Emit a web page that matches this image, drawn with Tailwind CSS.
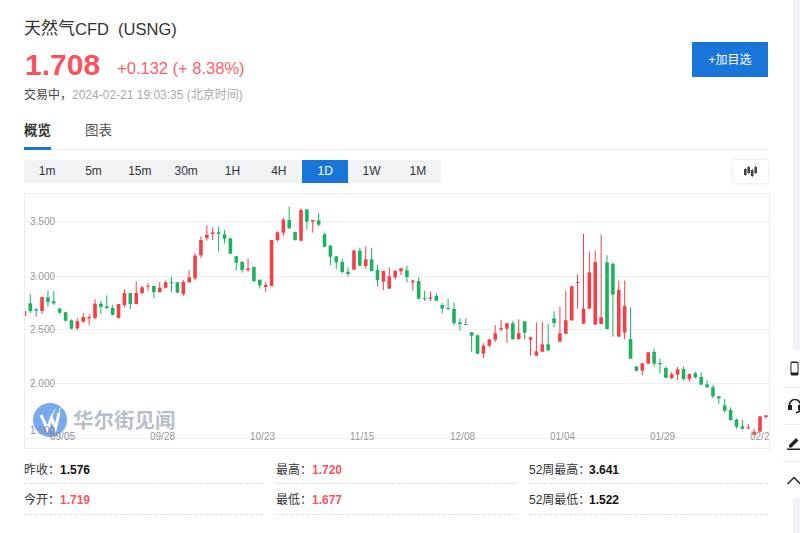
<!DOCTYPE html>
<html lang="zh">
<head>
<meta charset="utf-8">
<title>天然气CFD (USNG)</title>
<script src="https://cdn.jsdelivr.net/npm/@tailwindcss/browser@4"></script>
</head>
<body class="relative w-[800px] h-[533px] overflow-hidden bg-white font-['Liberation_Sans','Noto_Sans_CJK_SC',sans-serif] text-[#333]">
<div class="flex h-full">
  <main class="w-[793px] shrink-0 pl-6">
    <!-- header -->
    <div class="flex w-[744px] justify-between">
      <div class="pt-[19px]">
        <h1 class="flex h-5 items-center text-[16.5px] leading-5 font-normal whitespace-pre"><span class="text-[17px]">天然气</span>CFD  (USNG)</h1>
        <div class="mt-[8px] flex h-9 items-center pl-px">
          <span class="text-[30px] leading-9 font-bold text-[#f6545f]">1.708</span>
          <span class="ml-[17px] mt-[5px] text-[16.5px] leading-6 text-[#f6626c]">+0.132 (+ 8.38%)</span>
        </div>
        <div class="mt-[2px] flex h-5 items-center text-xs leading-5 whitespace-pre"><span class="text-[#444]">交易中，</span><span class="text-[#aaa]">2024-02-21 19:03:35 (北京时间)</span></div>
      </div>
      <button class="mt-[42px] h-[35px] w-[76px] bg-[#1a75d8] text-xs text-white">+加目选</button>
    </div>

    <!-- tabs -->
    <div class="mt-[10px] flex h-[35px] w-[744px] gap-[34px] border-b border-[#eee] text-[13.5px] leading-[32px]">
      <span class="h-[35px] border-b-[3px] border-[#1a75d8] font-bold text-[#333]">概览</span>
      <span class="text-[#555]">图表</span>
    </div>

    <!-- period bar -->
    <div class="mt-[10px] flex h-[23px] w-[744px] justify-between">
      <div class="flex w-[417px] bg-[#f2f3f5] text-xs leading-[23px] text-center">
        <span class="w-[46.33px]">1m</span>
        <span class="w-[46.33px]">5m</span>
        <span class="w-[46.33px]">15m</span>
        <span class="w-[46.33px]">30m</span>
        <span class="w-[46.33px]">1H</span>
        <span class="w-[46.33px]">4H</span>
        <span class="w-[46.33px] bg-[#1a75d8] text-white">1D</span>
        <span class="w-[46.33px]">1W</span>
        <span class="w-[46.33px]">1M</span>
      </div>
      <div class="flex w-[35px] items-center justify-center bg-white shadow-[0_0_3px_rgba(0,0,0,0.15)]">
        <svg width="13" height="13" viewBox="0 0 13 13" fill="#444">
          <path d="M0 4h2.600v6H0zM1 3h.6v8H1zM3.400 2h2.600v6H3.400zM4.400 0.500h.6v9h-.6zM6.800 5h2.700v6H6.800zM7.900 3.500h.6v9h-.6zM10.400 2h2.600v6h-2.600zM11.400 0h.6v9h-.6z"/>
        </svg>
      </div>
    </div>

    <!-- chart -->
    <div class="mt-[10px] h-[256px] w-[746px] border border-[#eee]">
      <svg id="kline" width="744" height="254" viewBox="0 0 744 254" class="block text-[10px]">
        <g stroke="#eee" stroke-width="1">
          <line x1="0" x2="744" y1="28" y2="28"/>
          <line x1="0" x2="744" y1="82.500" y2="82.500"/>
          <line x1="0" x2="744" y1="135.500" y2="135.500"/>
          <line x1="0" x2="744" y1="189.500" y2="189.500"/>
          <line x1="0" x2="744" y1="244.500" y2="244.500"/>
        </g>
        <g id="candles"></g>
        <!-- watermark -->
        <circle cx="25" cy="226" r="17" fill="#7aa9ee"/>
        <g fill="none" stroke="#fff" stroke-linejoin="miter">
          <path d="M16 221l6.500 14 4-11 4 10 3.500-15" stroke-width="3"/>
          <path d="M27 222l3-7M34 220l1-6" stroke-width="1"/>
        </g>
        <text x="48" y="234" font-size="20.500" font-weight="700" fill="#b9bfc9">华尔街见闻</text>
        <g fill="#999">
          <text x="5" y="31">3.500</text>
          <text x="5" y="85.500">3.000</text>
          <text x="5" y="139">2.500</text>
          <text x="5" y="193">2.000</text>
          <text x="5" y="239.500" fill="#8a8f98">1.500</text>
          <text x="25" y="246" fill="#8a8f98">09/05</text>
          <text x="125" y="246">09/28</text>
          <text x="225" y="246">10/23</text>
          <text x="325" y="246">11/15</text>
          <text x="425" y="246">12/08</text>
          <text x="525" y="246">01/04</text>
          <text x="625" y="246">01/29</text>
          <text x="725" y="246">02/21</text>
        </g>
      </svg>
    </div>

    <!-- stats -->
    <div class="mt-[7px] grid w-[744px] grid-cols-[239px_240px_239px] gap-x-[13px] text-xs leading-[29px] whitespace-nowrap">
      <div class="flex h-[28px] border-b border-dashed border-[#ddd]"><span class="w-9">昨收：</span><b class="text-[#111]">1.576</b></div>
      <div class="flex h-[28px] border-b border-dashed border-[#ddd]"><span class="w-9">最高：</span><b class="text-[#f6545f]">1.720</b></div>
      <div class="flex h-[28px] border-b border-dashed border-[#ddd]"><span class="w-[60px]">52周最高：</span><b class="text-[#111]">3.641</b></div>
      <div class="flex h-[31px] border-b border-dashed border-[#ddd] pt-[2px]"><span class="w-9">今开：</span><b class="text-[#f6545f]">1.719</b></div>
      <div class="flex h-[31px] border-b border-dashed border-[#ddd] pt-[2px]"><span class="w-9">最低：</span><b class="text-[#f6545f]">1.677</b></div>
      <div class="flex h-[31px] border-b border-dashed border-[#ddd] pt-[2px]"><span class="w-[60px]">52周最低：</span><b class="text-[#111]">1.522</b></div>
    </div>
  </main>
  <div class="flex-1 bg-[#f0f2f7]"></div>
</div>

<!-- floating tools -->
<div class="absolute top-[350px] left-[783px] w-[60px] bg-white">
  <div class="flex h-[38px] items-end border-b border-[#eee] pb-[11px] pl-[7px]">
    <svg width="9" height="15" viewBox="0 0 9 15"><rect x="0.500" y="0.500" width="8" height="14" rx="1.500" fill="#222"/><rect x="1.500" y="2" width="6" height="9.500" fill="#fff"/></svg>
  </div>
  <div class="flex h-[37px] items-center border-b border-[#eee] pl-[5px]">
    <svg width="14" height="15" viewBox="0 0 14 15" fill="none" stroke="#222"><path d="M1.500 8V6a5.500 5.500 0 0 1 11 0v2" stroke-width="1.500"/><rect x="0.500" y="6.500" width="3" height="4" fill="#222"/><rect x="10.500" y="6.500" width="3" height="4" fill="#222"/><path d="M12 10c0 2.500-2 3.500-4 3.500" stroke-width="1.500"/></svg>
  </div>
  <div class="flex h-[37px] items-center border-b border-[#eee] pl-[4px]">
    <svg width="14" height="14" viewBox="0 0 14 14" fill="#222"><path d="M2 9l7-7 2.500 2.500-7 7H2zM0 12.500h14V14H0z"/></svg>
  </div>
  <div class="flex h-[36px] items-center pl-[4px]">
    <svg width="14" height="9" viewBox="0 0 14 9" fill="none" stroke="#222" stroke-width="1.500"><path d="M0.500 8L7 1.500 13.500 8"/></svg>
  </div>
</div>

<script>
  // high, low, body top, body bottom, up(1 red)/down(0 green), in px*3 from y=190
  var data = [
    [363,378,363,378,1],[313,370,340,363,0],[354,380,358,362,0],[320,372,321,363,1],[302,350,322,336,0],[304,345,334,340,0],
    [353,372,356,368,0],[366,395,367,392,0],[388,418,391,416,0],[385,420,393,415,1],[370,398,381,395,1],[373,406,381,385,1],
    [328,388,341,384,1],[332,373,341,351,0],[316,358,349,354,0],[345,377,354,374,0],[342,385,342,384,1],[298,352,309,345,1],
    [309,357,309,342,0],[274,343,309,342,1],[288,312,292,309,1],[280,302,287,290,1],[288,325,288,306,0],[276,308,293,306,1],
    [272,296,277,293,1],[260,307,277,280,0],[276,309,277,308,0],[270,318,276,312,1],[241,279,262,277,1],[190,270,197,265,1],
    [140,204,150,196,1],[106,152,134,144,1],[112,150,127,132,1],[110,185,127,132,0],[120,160,133,146,0],[144,192,145,191,0],
    [198,242,199,218,0],[213,248,216,240,0],[205,246,235,240,1],[229,276,231,273,0],[267,296,270,286,0],[275,305,285,291,1],
    [150,288,150,288,1],[124,155,127,150,1],[84,138,89,128,1],[50,116,90,115,0],[125,152,126,150,0],[55,155,60,152,1],
    [58,118,58,95,0],[90,128,90,95,1],[70,108,91,104,0],[128,172,133,170,0],[165,225,167,200,0],[198,238,199,217,0],
    [206,250,216,246,0],[232,260,245,252,0],[178,240,182,239,1],[173,228,182,227,0],[170,236,208,228,1],[173,245,208,243,0],
    [224,290,240,270,0],[242,300,243,275,1],[232,297,259,296,1],[240,268,243,262,1],[233,255,235,244,1],[227,277,241,261,0],
    [270,302,272,277,1],[262,327,273,326,0],[302,333,324,326,0],[305,333,322,326,1],[310,334,318,332,0],[340,370,345,356,0],
    [327,360,354,357,0],[338,406,357,399,0],[385,422,397,402,0],[385,405,402,404,0],[426,485,427,437,0],[433,492,436,491,0],
    [460,505,467,491,1],[447,472,448,467,1],[405,456,430,449,1],[390,424,414,418,1],[398,458,400,416,1],[392,450,400,447,0],
    [388,450,430,447,1],[394,448,394,428,0],[440,497,442,449,1],[397,497,484,497,1],[395,486,463,485,1],[402,482,463,481,0],
    [364,412,385,399,0],[350,456,430,455,1],[302,432,391,431,1],[288,392,289,391,1],[253,356,276,278,1],[132,402,356,401,1],
    [184,356,247,356,1],[182,404,216,404,1],[134,403,382,402,1],[196,418,217,417,0],[217,440,222,314,0],[272,440,300,440,1],
    [272,448,348,428,1],[352,506,447,506,0],[528,545,530,542,0],[519,556,520,542,1],[487,521,487,521,1],[476,530,486,521,0],
    [506,550,519,523,0],[530,565,534,563,0],[545,568,553,564,1],[531,570,538,554,1],[530,571,537,567,0],[550,575,552,567,1],
    [545,566,550,562,0],[547,584,561,584,0],[570,594,583,592,0],[585,625,592,619,0],[618,641,619,625,0],[627,668,646,662,0],
    [652,692,660,690,0],[686,716,689,710,0],[690,719,709,716,0],[702,718,712,715,1],[716,737,725,735,1],[678,725,679,725,1],
    [675,686,676,681,1]
  ];
  var g = document.getElementById('candles');
  var ns = 'http://www.w3.org/2000/svg';
  data.forEach(function (d, i) {
    var x = -0.6 + 5.885 * i;
    var y = function (v) { return (v / 3) - 4; };
    var color = d[4] ? '#f2404a' : '#1cb25f';
    var wick = document.createElementNS(ns, 'line');
    wick.setAttribute('x1', x); wick.setAttribute('x2', x);
    wick.setAttribute('y1', y(d[0])); wick.setAttribute('y2', y(d[1]));
    wick.setAttribute('stroke', color);
    g.appendChild(wick);
    var body = document.createElementNS(ns, 'rect');
    body.setAttribute('x', x - 1.8); body.setAttribute('width', 3.6);
    body.setAttribute('y', y(d[2])); body.setAttribute('height', Math.max(1, (d[3] - d[2]) / 3));
    body.setAttribute('fill', color);
    g.appendChild(body);
  });
</script>
</body>
</html>
